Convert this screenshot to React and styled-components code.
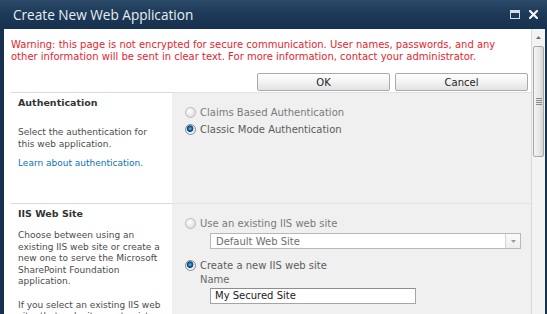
import React from "react";
import styled, { createGlobalStyle } from "styled-components";

const GlobalStyle = createGlobalStyle`
  html, body {
    margin: 0;
    padding: 0;
    background: #17314e;
  }
  body {
    overflow: hidden;
  }
`;

const Window = styled.div`
  width: 547px;
  height: 314px;
  display: flex;
  flex-direction: column;
  background: #17314e;
  overflow: hidden;
`;

const TitleBar = styled.div`
  height: 29px;
  flex: none;
  display: flex;
  align-items: center;
  justify-content: space-between;
  padding: 0 9px 0 13px;
  background: linear-gradient(#2c4a69, #1d3a58 45%, #17314e);
`;

const Title = styled.div`
  font-family: "Open Sans", "Noto Sans", sans-serif;
  font-size: 13.6px;
  color: #e8edf2;
`;

const WindowButtons = styled.div`
  display: flex;
  align-items: center;
  gap: 9px;
`;

const MaxIcon = styled.span`
  width: 10px;
  height: 9px;
  box-sizing: border-box;
  border: 1px solid #d3dbe4;
  border-top-width: 3px;
`;

const Body = styled.div`
  flex: 1;
  min-height: 0;
  display: flex;
  padding: 0 2px 0 4px;
`;

const Content = styled.div`
  flex: 1;
  background: #fff;
  display: flex;
  flex-direction: column;
  overflow: hidden;
  font-family: "DejaVu Sans", sans-serif;
`;

const Warning = styled.div`
  flex: none;
  padding: 10px 20px 0 7px;
  font-size: 10px;
  line-height: 12px;
  color: #e2262e;
`;

const ButtonRow = styled.div`
  flex: none;
  display: flex;
  justify-content: flex-end;
  gap: 5px;
  padding-right: 3px;
  margin: 10px 0 1px;
`;

const Button = styled.button`
  width: 133px;
  height: 18px;
  padding: 0;
  border: 1px solid #a9a9a9;
  border-radius: 2px;
  background: linear-gradient(#fefefe, #f2f2f2 50%, #e2e2e2);
  font-family: "DejaVu Sans", sans-serif;
  font-size: 10px;
  color: #1e1e1e;
`;

const Section = styled.div`
  flex: none;
  display: grid;
  grid-template-columns: 168px 1fr;
  height: ${(p) => p.$height || "auto"};
`;

const LeftCol = styled.div`
  margin-left: 7px;
  border-top: 1px solid #d9d9d9;
  padding: 3px 8px 0 7px;
  color: #4a4a4a;
`;

const RightCol = styled.div`
  background: #f0f0f0;
  border-top: 1px solid #e2e2e2;
  padding: 11px 0 0 13px;
`;

const Heading = styled.div`
  font-weight: bold;
  font-size: 9.5px;
  line-height: 13px;
  color: #333;
`;

const Desc = styled.p`
  margin: ${(p) => p.$top || 0}px 0 0;
  font-size: 9px;
  line-height: 11.5px;
  color: #4c4c4c;
`;

const Link = styled.a`
  color: #0c72b8;
  text-decoration: none;
`;

const RadioRow = styled.label`
  display: flex;
  align-items: center;
  gap: 4px;
  height: 17px;
  margin-top: ${(p) => p.$top || 0}px;
  font-size: 10px;
  color: ${(p) => (p.$disabled ? "#7a7a7a" : "#5c5c5c")};
`;

const Radio = styled.span`
  width: 11px;
  height: 11px;
  box-sizing: border-box;
  border-radius: 50%;
  border: 1px solid ${(p) => (p.$checked ? "#7e8a96" : "#b9b9b9")};
  background: ${(p) =>
    p.$checked
      ? "radial-gradient(circle at 45% 40%, #7fc0ef 0, #1d6fb1 1.6px, #0c3f6e 3px, #dfe4e8 3.6px, #f7f7f7 5px)"
      : "radial-gradient(circle at 40% 35%, #ffffff, #e1e1e1 70%)"};
  flex: none;
`;

const Select = styled.div`
  margin: 1px 0 0 25px;
  width: 311px;
  height: 16px;
  box-sizing: border-box;
  display: flex;
  align-items: center;
  background: #fff;
  border: 1px solid #b8b8b8;
  font-size: 10px;
  color: #6e6e6e;
`;

const SelectText = styled.span`
  flex: 1;
  padding-left: 5px;
`;

const SelectArrow = styled.span`
  width: 14px;
  height: 14px;
  display: flex;
  align-items: center;
  justify-content: center;
  border-left: 1px solid #d4d4d4;
  background: linear-gradient(#fbfbfb, #eeeeee);
`;

const FieldLabel = styled.div`
  padding-left: 15px;
  font-size: 10px;
  line-height: 12px;
  color: #6a6a6a;
`;

const TextBox = styled.div`
  margin: 2px 0 0 25px;
  width: 206px;
  height: 16px;
  box-sizing: border-box;
  border: 1px solid #a5a5a5;
  border-top-color: #8d8d8d;
  background: #fff;
  padding-left: 4px;
  font-size: 10px;
  line-height: 14px;
  color: #222;
`;

const Scrollbar = styled.div`
  width: 14px;
  flex: none;
  display: flex;
  flex-direction: column;
  background: #f3f3f3;
  border-left: 1px solid #dadada;
  box-sizing: border-box;
`;

const ScrollArrow = styled.div`
  height: 17px;
  display: flex;
  align-items: center;
  justify-content: center;
`;

const Thumb = styled.div`
  height: 111px;
  margin: 0 1px;
  box-sizing: border-box;
  border: 1px solid #a8a8a8;
  border-radius: 2px;
  background: linear-gradient(90deg, #f4f4f4, #e6e6e6 60%, #d6d6d6);
  display: flex;
  align-items: center;
  justify-content: center;
`;

const Grip = styled.span`
  width: 6px;
  height: 7px;
  background: repeating-linear-gradient(#8a8a8a 0 1px, transparent 1px 2px);
`;

export default function App() {
  return (
    <>
      <GlobalStyle />
      <Window>
        <TitleBar>
          <Title>Create New Web Application</Title>
          <WindowButtons>
            <MaxIcon />
            <svg width="9" height="9" viewBox="0 0 9 9">
              <path d="M1 1 L8 8 M8 1 L1 8" stroke="#f4f6f9" strokeWidth="2.2" strokeLinecap="square" />
            </svg>
          </WindowButtons>
        </TitleBar>
        <Body>
          <Content>
            <Warning>
              Warning: this page is not encrypted for secure communication. User names, passwords, and any
              other information will be sent in clear text. For more information, contact your administrator.
            </Warning>
            <ButtonRow>
              <Button>OK</Button>
              <Button>Cancel</Button>
            </ButtonRow>
            <Section $height="111px">
              <LeftCol>
                <Heading>Authentication</Heading>
                <Desc $top={18}>
                  Select the authentication for
                  <br />
                  this web application.
                </Desc>
                <Desc $top={8}>
                  <Link href="#">Learn about authentication.</Link>
                </Desc>
              </LeftCol>
              <RightCol>
                <RadioRow $disabled>
                  <Radio />
                  Claims Based Authentication
                </RadioRow>
                <RadioRow>
                  <Radio $checked />
                  Classic Mode Authentication
                </RadioRow>
              </RightCol>
            </Section>
            <Section>
              <LeftCol>
                <Heading>IIS Web Site</Heading>
                <Desc $top={10}>
                  Choose between using an
                  <br />
                  existing IIS web site or create a
                  <br />
                  new one to serve the Microsoft
                  <br />
                  SharePoint Foundation
                  <br />
                  application.
                </Desc>
                <Desc $top={12}>
                  If you select an existing IIS web
                  <br />
                  site, that web site must exist on
                </Desc>
              </LeftCol>
              <RightCol>
                <RadioRow $disabled>
                  <Radio />
                  Use an existing IIS web site
                </RadioRow>
                <Select>
                  <SelectText>Default Web Site</SelectText>
                  <SelectArrow>
                    <svg width="5" height="3" viewBox="0 0 5 3">
                      <path d="M0 0 H5 L2.5 3 Z" fill="#9a9a9a" />
                    </svg>
                  </SelectArrow>
                </Select>
                <RadioRow $top={8}>
                  <Radio $checked />
                  Create a new IIS web site
                </RadioRow>
                <FieldLabel>Name</FieldLabel>
                <TextBox>My Secured Site</TextBox>
              </RightCol>
            </Section>
          </Content>
          <Scrollbar>
            <ScrollArrow>
              <svg width="5" height="3" viewBox="0 0 5 3">
                <path d="M0 3 H5 L2.5 0 Z" fill="#6f6f6f" />
              </svg>
            </ScrollArrow>
            <Thumb>
              <Grip />
            </Thumb>
          </Scrollbar>
        </Body>
      </Window>
    </>
  );
}
